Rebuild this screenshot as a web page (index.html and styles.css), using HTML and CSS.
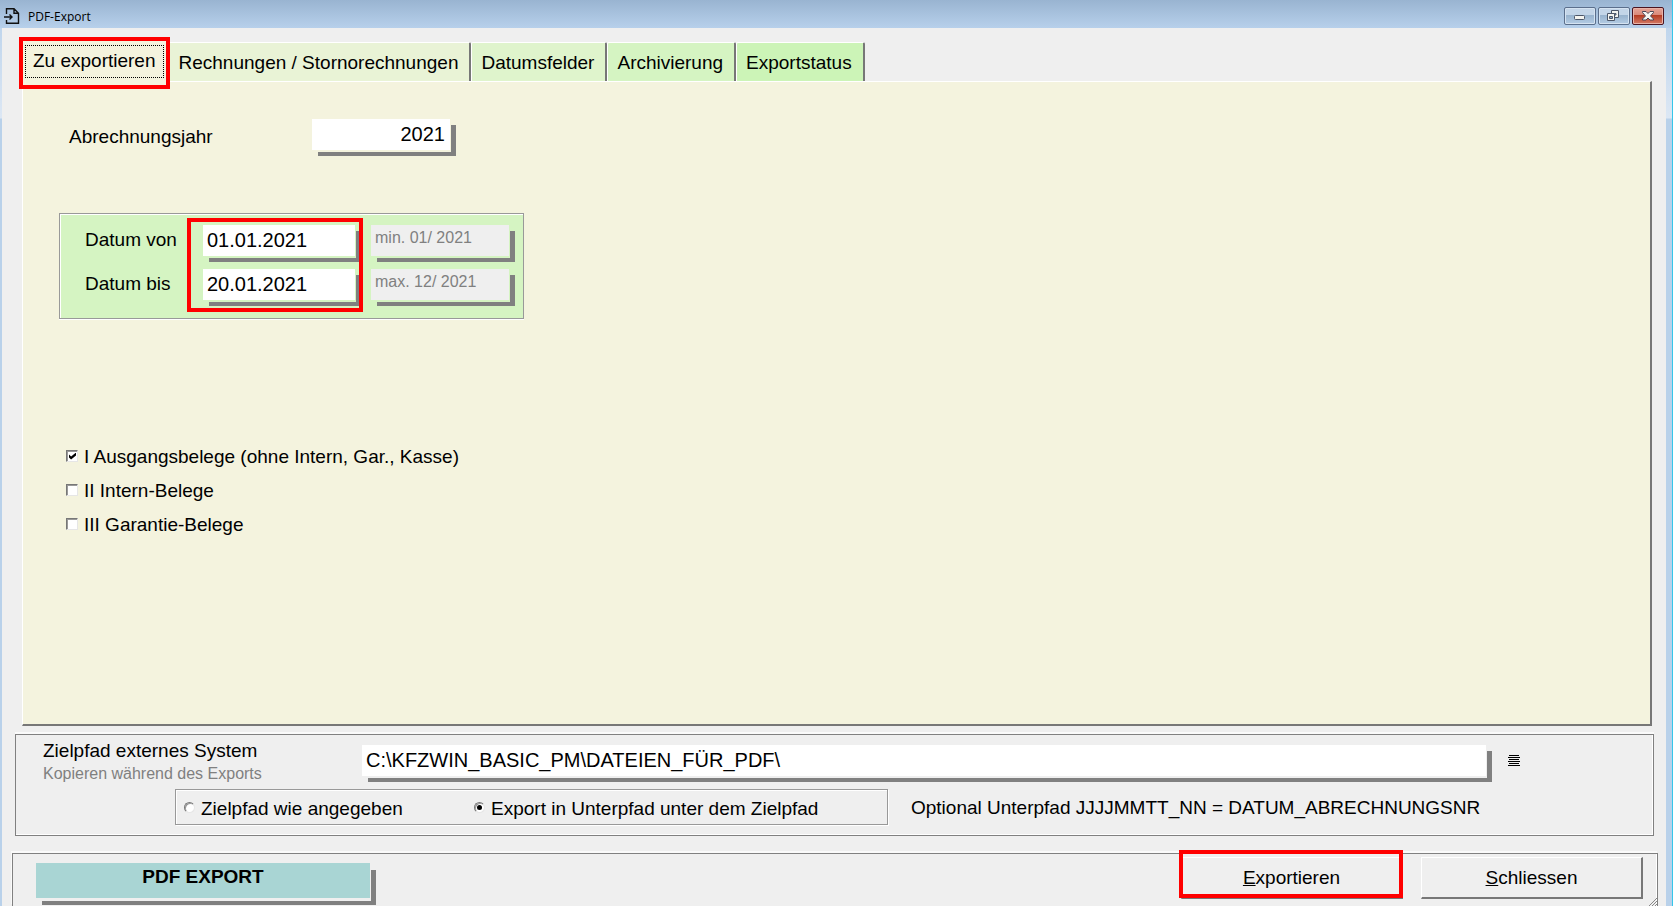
FILE: index.html
```html
<!DOCTYPE html>
<html lang="de">
<head>
<meta charset="utf-8">
<title>PDF-Export</title>
<link rel="stylesheet" href="styles.css">
</head>
<body>
<div class="window">
  <header class="titlebar">
    <svg class="app-icon" viewBox="0 0 16 16" aria-hidden="true">
      <path d="M2.500 6V.700h7.500l4.500 4.500v10h-12V12M10 1v4.200h4.200M0 9h8M5.500 6.500 8 9l-2.500 2.500" fill="none" stroke="#111" stroke-width="1.400"/>
    </svg>
    <h1 class="title">PDF-Export</h1>
    <div class="controls">
      <button class="control" type="button" aria-label="Minimieren">
        <svg viewBox="0 0 30 16"><rect x="9.500" y="7.500" width="10" height="4" rx="1" fill="#f4f4f0" stroke="#4c5668"/></svg>
      </button>
      <button class="control" type="button" aria-label="Wiederherstellen">
        <svg viewBox="0 0 30 16"><g fill="#f4f4f0" stroke="#4c5668"><path d="M12.500 2.500h7v7h-7z"/><path d="M15.500 5.500h1.500v1.500h-1.500z" fill="#8aa6c4"/><path d="M8.500 5.500h7v7h-7z"/><path d="M10.500 8.500h3v2h-3z" fill="#8aa6c4"/></g></svg>
      </button>
      <button class="control control-close" type="button" aria-label="Schließen">
        <svg viewBox="0 0 30 16"><path d="M9.500 3.500h3.500l2 2 2-2h3.500v1L17.500 8l3 3v1h-3.500l-2-2-2 2H9.500v-1l3-3-3-3.500z" fill="#f4f4f0" stroke="#4c4656"/></svg>
      </button>
    </div>
  </header>

  <main class="client">
    <div class="tabs" role="tablist">
      <button class="tab tab-active marked" role="tab" aria-selected="true" type="button"><span class="focus">Zu exportieren</span></button>
      <button class="tab tone-1" role="tab" type="button">Rechnungen / Stornorechnungen</button>
      <button class="tab tone-2" role="tab" type="button">Datumsfelder</button>
      <button class="tab tone-3" role="tab" type="button">Archivierung</button>
      <button class="tab tone-4" role="tab" type="button">Exportstatus</button>
    </div>

    <section class="panel" role="tabpanel">
      <div class="year-row">
        <label for="year">Abrechnungsjahr</label>
        <input class="field field-year" id="year" type="text" value="2021">
      </div>
      <div class="range">
        <div class="range-labels">
          <label for="from">Datum von</label>
          <label for="to">Datum bis</label>
        </div>
        <div class="range-dates marked">
          <input class="field" id="from" type="text" value="01.01.2021">
          <input class="field" id="to" type="text" value="20.01.2021">
        </div>
        <div class="range-limits">
          <input class="field field-limit" type="text" value="min. 01/ 2021" aria-label="Minimum" readonly>
          <input class="field field-limit" type="text" value="max. 12/ 2021" aria-label="Maximum" readonly>
        </div>
      </div>
      <div class="checks">
        <label class="option"><input class="check" type="checkbox" checked>I Ausgangsbelege (ohne Intern, Gar., Kasse)</label>
        <label class="option"><input class="check" type="checkbox">II Intern-Belege</label>
        <label class="option"><input class="check" type="checkbox">III Garantie-Belege</label>
      </div>
    </section>

    <section class="target">
      <div class="path-row">
        <div class="path-label">
          <label for="path">Zielpfad externes System</label>
          <span class="hint">Kopieren während des Exports</span>
        </div>
        <input class="field field-path" id="path" type="text" value="C:\KFZWIN_BASIC_PM\DATEIEN_FÜR_PDF\">
        <button class="browse" type="button" aria-label="Pfad wählen">
          <svg viewBox="0 0 12 12" shape-rendering="crispEdges"><path d="M1 .5h10M0 2.500h12M1 4.500h10M0 6.500h12M1 8.500h10M0 10.500h12" stroke="#000" fill="none"/></svg>
        </button>
      </div>
      <div class="mode-row">
        <div class="modes">
          <label class="option"><input class="radio" type="radio" name="mode">Zielpfad wie angegeben</label>
          <label class="option"><input class="radio" type="radio" name="mode" checked>Export in Unterpfad unter dem Zielpfad</label>
        </div>
        <span>Optional Unterpfad JJJJMMTT_NN = DATUM_ABRECHNUNGSNR</span>
      </div>
    </section>

    <footer class="actions">
      <strong class="banner">PDF EXPORT</strong>
      <div class="buttons">
        <button class="action action-marked" type="button"><u>E</u>xportieren</button>
        <button class="action" type="button"><u>S</u>chliessen</button>
      </div>
      <svg class="grip" viewBox="0 0 8 8" aria-hidden="true"><path d="M0 8 8 0M3 8l5-5M6 8l2-2" stroke="#888" fill="none"/></svg>
    </footer>
  </main>
</div>
</body>
</html>
```

FILE: styles.css
```css
* { box-sizing: border-box; }

body {
  margin: 0;
  background: #efefef;
  color: #000;
  font: 19px/22px "Liberation Sans", Arial, sans-serif;
}

button, input { font: inherit; color: inherit; }

.window {
  display: flex;
  flex-direction: column;
  height: 100vh;
  overflow: hidden;
  background: linear-gradient(#b7d0ea, #dce7f4 118px, #b9d1ea 119px);
  border-right: 1px solid #35c6ea;
}

.titlebar {
  display: flex;
  flex: none;
  align-items: center;
  height: 28px;
  padding: 4px 8px 0 4px;
  background: linear-gradient(#99b4d1, #b7d0eb);
}

.app-icon { width: 16px; height: 16px; }

.title {
  margin: 2px auto 0 8px;
  font: 12px/16px "Open Sans", "Noto Sans", sans-serif;
}

.controls { display: flex; gap: 2px; }

.control {
  width: 32px;
  height: 18px;
  padding: 0;
  border: 1px solid #5b6f8c;
  border-radius: 2px;
  background: linear-gradient(#c3d5e8 0 45%, #98b3ce 46%, #b4cce4);
  box-shadow: inset 0 0 0 1px #d5e3f1;
}

.control svg { display: block; width: 30px; height: 16px; }

.control-close {
  border-color: #4b1420;
  background: linear-gradient(#e5a497, #d98878 45%, #b53c22 46%, #d47a66);
  box-shadow: inset 0 0 0 1px #e9b3a8;
}

.client {
  display: flex;
  flex: 1;
  flex-direction: column;
  min-height: 0;
  margin: 0 6px 0 2px;
  background: #efefef;
}

.marked { outline: 4px solid #f00; }

.tabs {
  display: flex;
  align-items: flex-end;
  height: 53px;
  padding-left: 21px;
}

.tab {
  height: 39px;
  padding: 2px 11px 0;
  border: 0;
  border-top: 1px solid #fff;
  border-left: 1px solid #fff;
  border-right: 2px solid #777;
  border-radius: 2px 2px 0 0;
  white-space: nowrap;
}

.tab + .tab + .tab { padding-left: 9px; }

.tab-active {
  z-index: 1;
  height: 44px;
  margin: 0 1px -4px 0;
  padding: 0 2px 4px;
  border: 0;
  border-radius: 0;
  background: #f4f3de;
}

.focus {
  display: block;
  padding: 4px 7px 5px;
  border: 1px dotted #000;
}

.tone-1 { background: #e9f3d6; }
.tone-2 { background: #dff4cc; }
.tone-3 { background: #d5f4c2; }
.tone-4 { background: #ccf4b7; }

.panel {
  --under: #f4f3de;
  flex: 1;
  margin: 0 14px 0 20px;
  padding: 37px 36px 0;
  border: 1px solid #fff;
  border-right: 2px solid #777;
  border-bottom: 2px solid #777;
  background: #f4f3de;
}

.field {
  display: block;
  width: 152px;
  height: 31px;
  padding: 0 4px;
  border: 0;
  border-radius: 0;
  background: #fff;
  box-shadow: 1px 2px 0 var(--under), 6px 6px 0 #808080;
  font-size: 20px;
}

.year-row { display: flex; align-items: center; padding-left: 10px; }
.year-row label { width: 243px; padding-top: 4px; }
.field-year { width: 138px; padding: 0 5px 1px; text-align: right; }

.range {
  --under: #d5f4c2;
  display: flex;
  width: 465px;
  height: 106px;
  margin-top: 63px;
  padding-left: 25px;
  border: 1px solid #999;
  background: #d5f4c2;
  box-shadow: inset 1px 1px 0 #fff, 0 1px 0 #fff;
}

.range-labels { display: grid; align-content: start; gap: 22px; width: 106px; padding-top: 15px; }

.range-dates {
  display: grid;
  align-content: start;
  gap: 13px;
  width: 168px;
  height: 86px;
  margin-top: 8px;
  padding: 3px 0 0 12px;
}

.range-limits { display: grid; align-content: start; gap: 13px; padding: 11px 0 0 12px; }

.field-limit {
  width: 138px;
  padding-bottom: 6px;
  background: #efefef;
  color: #808080;
  font-size: 16px;
}

.checks { display: grid; gap: 12px; margin-top: 127px; padding-left: 7px; }

.option { display: flex; align-items: center; gap: 5px; }

.check, .radio {
  appearance: none;
  flex: none;
  width: 12px;
  height: 12px;
  margin: 0 1px 3px 0;
  border: 1px solid;
  border-color: #777 #e6e6e6 #e6e6e6 #777;
  background: #fff;
  box-shadow: inset 1px 1px 0 #999;
}

.check:checked::before {
  content: "";
  display: block;
  width: 7px;
  height: 7px;
  margin: 2px;
  background: #000;
  clip-path: polygon(0 28%, 30% 58%, 100% 0, 100% 42%, 30% 100%, 0 72%);
}

.radio { width: 11px; height: 11px; border-radius: 50%; }

.radio:checked::before {
  content: "";
  display: block;
  width: 5px;
  height: 5px;
  margin: 2px;
  border-radius: 50%;
  background: #000;
}

.target {
  --under: #efefef;
  margin: 8px 12px 0 13px;
  padding: 10px 0 10px 27px;
  border: 1px solid #808080;
  box-shadow: 0 -2px 0 #fafafa, inset 0 -1px 0 #fff, inset -1px 0 0 #fff;
}

.path-row { display: flex; height: 44px; }

.path-label { display: flex; flex-direction: column; gap: 1px; width: 319px; margin-top: -5px; }

.hint { color: #808080; font-size: 16px; }

.field-path { flex: 1; min-width: 0; }

.browse {
  width: 12px;
  height: 12px;
  margin: 10px 133px 0 22px;
  padding: 0;
  border: 0;
  background: none;
}

.browse svg { display: block; width: 12px; height: 12px; }

.mode-row { display: flex; align-items: center; gap: 23px; padding-left: 132px; white-space: nowrap; }
.mode-row > span { padding-top: 2px; }

.modes {
  display: flex;
  width: 713px;
  height: 36px;
  padding: 4px 0 0 8px;
  border: 1px solid #999;
  box-shadow: inset 1px 1px 0 #fff, 1px 1px 0 #fff;
}

.modes .option { width: 290px; }

.actions {
  --under: #efefef;
  position: relative;
  display: flex;
  align-items: flex-start;
  justify-content: space-between;
  height: 53px;
  margin: 17px 8px 0 10px;
  padding: 3px 14px 0 23px;
  border: 1px solid #808080;
  border-bottom: 0;
  box-shadow: -1px -2px 0 #fafafa, inset -1px 0 0 #fff;
}

.banner {
  width: 334px;
  height: 35px;
  margin-top: 6px;
  padding-top: 3px;
  background: #a9d5d4;
  box-shadow: 1px 3px 0 var(--under), 6px 7px 0 #808080;
  text-align: center;
}

.buttons { display: flex; gap: 18px; }

.action {
  width: 222px;
  height: 42px;
  border: 1px solid #fff;
  border-right: 2px solid #777;
  border-bottom: 2px solid #777;
  background: #efefef;
}

.action-marked { position: relative; }

.action-marked::after {
  content: "";
  position: absolute;
  inset: -8px -2px -1px -3px;
  border: 4px solid #f00;
}

.grip { position: absolute; right: 0; bottom: 0; width: 8px; height: 8px; }
```
